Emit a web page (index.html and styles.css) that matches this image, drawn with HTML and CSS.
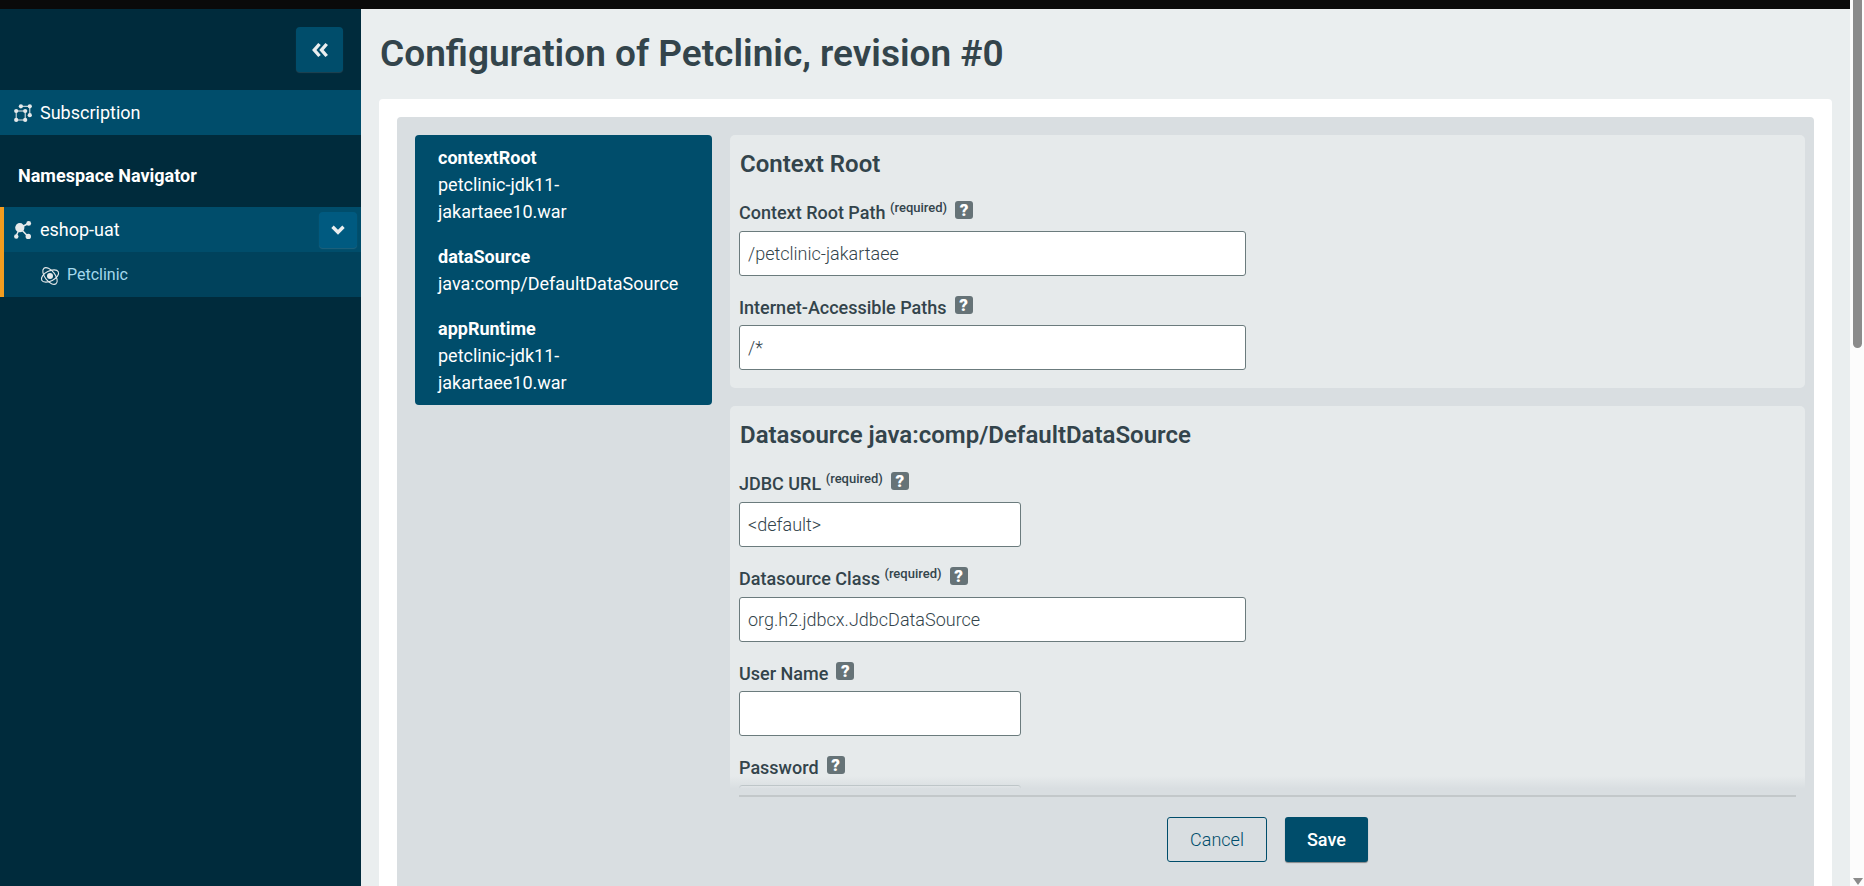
FILE: index.html
```html
<!DOCTYPE html>
<html lang="en">
<head>
<meta charset="utf-8">
<title>Configuration of Petclinic</title>
<link rel="stylesheet" href="styles.css">
</head>
<body>
<div class="page">
  <div class="topbar"></div>
  <div class="shell">
    <nav class="sidebar">
      <div class="sidebar-head">
        <button class="collapse" type="button" aria-label="Collapse sidebar">
          <svg width="18" height="18" viewBox="0 0 18 18" fill="none" stroke="currentColor" stroke-width="3.400"><path d="M8.500 3L3.300 9l5.200 6M15.700 3L10.500 9l5.200 6"/></svg>
        </button>
      </div>
      <a class="nav-row" href="#">
        <svg class="icon" width="18" height="18" viewBox="0 0 18 18" stroke="currentColor" fill="none" stroke-width="1"><path d="M2.200 7h9v9h-9zM6.900 2.300h8.900v8.900"/><g fill="currentColor" stroke="none"><circle cx="2.200" cy="7" r="2.100"/><circle cx="11.200" cy="7" r="2.100"/><circle cx="2.200" cy="15.900" r="2.100"/><circle cx="11.200" cy="15.900" r="2.100"/><circle cx="6.900" cy="2.300" r="2.100"/><circle cx="15.800" cy="2.300" r="2.100"/><circle cx="15.800" cy="11.200" r="2.100"/></g></svg>
        <span>Subscription</span>
      </a>
      <h2 class="nav-title">Namespace Navigator</h2>
      <div class="nav-group">
        <div class="nav-parent">
          <a class="nav-row nav-space" href="#">
            <svg class="icon" width="18" height="18" viewBox="0 0 18 18" stroke="currentColor" fill="none" stroke-width="1.500"><path d="M6 7l9-5M6 7l-4 8M6 7l8 8.500"/><g fill="currentColor" stroke="none"><circle cx="5.800" cy="6.700" r="4.600"/><circle cx="14.700" cy="2.400" r="2.400"/><circle cx="2.300" cy="15.500" r="2.200"/><circle cx="14.300" cy="15.400" r="2.700"/></g></svg>
            <span>eshop-uat</span>
          </a>
          <button class="toggle" type="button" aria-label="Toggle eshop-uat">
            <svg width="14" height="10" viewBox="0 0 14 10" fill="none" stroke="currentColor" stroke-width="3.400"><path d="M1.500 1.800L7 7.300l5.500-5.500"/></svg>
          </button>
        </div>
        <a class="nav-row nav-child" href="#">
          <svg class="icon" width="18" height="18" viewBox="0 0 18 18" stroke="currentColor" fill="none" stroke-width="1.100"><circle cx="9" cy="9" r="3" fill="currentColor" stroke="none"/><ellipse cx="9" cy="9" rx="9.300" ry="5" transform="rotate(-27 9 9)"/><ellipse cx="9" cy="9" rx="9.800" ry="5" transform="rotate(52 9 9)"/></svg>
          <span>Petclinic</span>
        </a>
      </div>
    </nav>
    <main class="main">
      <h1 class="title">Configuration of Petclinic, revision #0</h1>
      <div class="card">
        <div class="wizard">
          <dl class="summary">
            <div><dt>contextRoot</dt><dd>petclinic-jdk11-jakartaee10.war</dd></div>
            <div><dt>dataSource</dt><dd>java:comp/DefaultDataSource</dd></div>
            <div><dt>appRuntime</dt><dd>petclinic-jdk11-jakartaee10.war</dd></div>
          </dl>
          <form class="config">
            <div class="scroll">
              <section class="panel">
                <h2>Context Root</h2>
                <div class="field required">
                  <div class="label"><label for="root-path">Context Root Path <sup>(required)</sup></label><button class="help" type="button">?</button></div>
                  <input id="root-path" type="text" value="/petclinic-jakartaee">
                </div>
                <div class="field">
                  <div class="label"><label for="paths">Internet-Accessible Paths</label><button class="help" type="button">?</button></div>
                  <input id="paths" type="text" value="/*">
                </div>
              </section>
              <section class="panel">
                <h2>Datasource java:comp/DefaultDataSource</h2>
                <div class="field required">
                  <div class="label"><label for="jdbc">JDBC URL <sup>(required)</sup></label><button class="help" type="button">?</button></div>
                  <input id="jdbc" class="short" type="text" value="&lt;default&gt;">
                </div>
                <div class="field required">
                  <div class="label"><label for="ds-class">Datasource Class <sup>(required)</sup></label><button class="help" type="button">?</button></div>
                  <input id="ds-class" type="text" value="org.h2.jdbcx.JdbcDataSource">
                </div>
                <div class="field">
                  <div class="label"><label for="user">User Name</label><button class="help" type="button">?</button></div>
                  <input id="user" class="short" type="text">
                </div>
                <div class="field">
                  <div class="label"><label for="password">Password</label><button class="help" type="button">?</button></div>
                  <input id="password" class="short" type="password">
                </div>
              </section>
            </div>
            <div class="actions">
              <button class="btn cancel" type="button">Cancel</button>
              <button class="btn save" type="submit">Save</button>
            </div>
          </form>
        </div>
      </div>
    </main>
  </div>
</div>
<div class="scrollbar"><div class="thumb"></div><div class="arrow"></div></div>
</body>
</html>
```
FILE: styles.css
```css
* { box-sizing: border-box; }
body {
  margin: 0;
  height: 100vh;
  overflow: hidden;
  display: grid;
  grid-template-columns: minmax(0, 1fr) 14px;
  grid-template-rows: 100vh;
  font: 400 18px/27px Roboto, "Liberation Sans", sans-serif;
  color: #33444b;
  background: #fcfcfc;
}
h1, h2, dl, dd { margin: 0; }
button, input { font: inherit; }
button { padding: 0; border: 0; cursor: pointer; }

.page { display: flex; flex-direction: column; min-height: 0; overflow: hidden; }
.topbar { flex: none; height: 9px; background: #0a0a0a; }
.shell { flex: 1; min-height: 0; display: grid; grid-template-columns: 361px minmax(0, 1fr); }

.sidebar { background: #002b3c; color: #fff; }
.sidebar-head { display: flex; justify-content: flex-end; padding: 18px; }
.collapse, .toggle {
  display: grid;
  place-items: center;
  color: #eaeeef;
  border-radius: 4px;
  box-shadow: 0 1px 1px rgba(255, 255, 255, .12);
}
.collapse { width: 47px; height: 45px; background: #004d6b; }
.nav-row {
  display: flex;
  align-items: center;
  gap: 8px;
  height: 45px;
  padding-left: 14px;
  background: #004d6b;
  color: #fff;
  text-decoration: none;
}
.icon { flex: none; overflow: visible; color: #e6eaeb; }
.nav-title { padding: 27px 18px 18px; line-height: 27px; font-size: 18px; font-weight: 700; }
.nav-group { border-left: 4px solid #f39c1f; }
.nav-parent { display: flex; align-items: center; background: #004d6b; padding-right: 4px; }
.nav-space { flex: 1; padding-left: 10px; }
.toggle { width: 38px; height: 36px; background: #005a80; }
.nav-child { background: #00425c; padding-left: 37px; font-size: 16px; color: #a4d8ec; }
.nav-child .icon { margin-top: 3px; }

.main { min-width: 0; padding: 0 18px; background: #eaeeef; overflow: hidden; }
.title { padding: 18px 0 18px 1px; font-size: 37px; line-height: 54px; font-weight: 600; }
.card { padding: 18px 18px 0; background: #fff; border-radius: 4px; min-height: 100%; }
.wizard {
  display: grid;
  grid-template-columns: 297px minmax(0, 1fr);
  gap: 18px;
  align-items: start;
  min-height: 100vh;
  padding: 18px 9px 18px 18px;
  background: #d9dee1;
  border-radius: 4px;
}
.summary {
  display: grid;
  gap: 18px;
  padding: 9px 27px 9px 23px;
  background: #004d6b;
  color: #fff;
  border-radius: 4px;
}
.summary dt { font-weight: 700; }

.scroll { position: relative; height: calc(100vh - 231px); overflow: hidden; display: grid; gap: 18px; align-content: start; }
.scroll::after {
  content: "";
  position: absolute;
  inset: auto 0 0;
  height: 14px;
  background: linear-gradient(rgba(217, 222, 225, 0), #d9dee1 90%);
}
.panel { padding: 0 9px 18px; background: #e6eaeb; border-radius: 5px; }
.panel h2 { padding: 16px 1px 21px; font-size: 24px; line-height: 27px; font-weight: 600; }
.field + .field { margin-top: 18px; }
.label { display: flex; align-items: flex-start; gap: 8px; height: 31px; font-weight: 500; }
.required .label { height: 32px; }
.label sup { font-size: 13px; line-height: 1; vertical-align: 7px; }
.help {
  flex: none;
  width: 18px;
  height: 18px;
  margin-top: 2px;
  background: #667377;
  color: #fff;
  border-radius: 3px;
  font-size: 17px;
  line-height: 18px;
  font-weight: 900;
}
.field input {
  display: block;
  width: 507px;
  max-width: 100%;
  height: 45px;
  padding: 0 8px;
  border: 1px solid #6b7b7d;
  border-radius: 3px;
  background: #fff;
  color: #33444b;
  font-weight: 300;
}
.field input.short { width: 282px; }
.actions {
  display: flex;
  justify-content: center;
  gap: 18px;
  margin: 5px 9px 0;
  padding-top: 20px;
  border-top: 2px solid #c3c8ca;
}
.btn { height: 45px; border-radius: 3px; }
.cancel { padding: 0 22px; border: 1px solid #004d6b; background: transparent; color: #004d6b; font-weight: 300; }
.save { padding: 0 22px; background: #004d6b; color: #fff; font-weight: 500; box-shadow: 0 1px 1px rgba(0, 0, 0, .4); }

.scrollbar { display: flex; flex-direction: column; align-items: center; justify-content: space-between; padding: 0 2px 1px 3px; }
.thumb { width: 9px; height: 348px; background: #8b8b8b; border-radius: 0 0 5px 5px; }
.arrow { border: 5px solid transparent; border-top: 7px solid #8b8b8b; border-bottom: 0; }
```
